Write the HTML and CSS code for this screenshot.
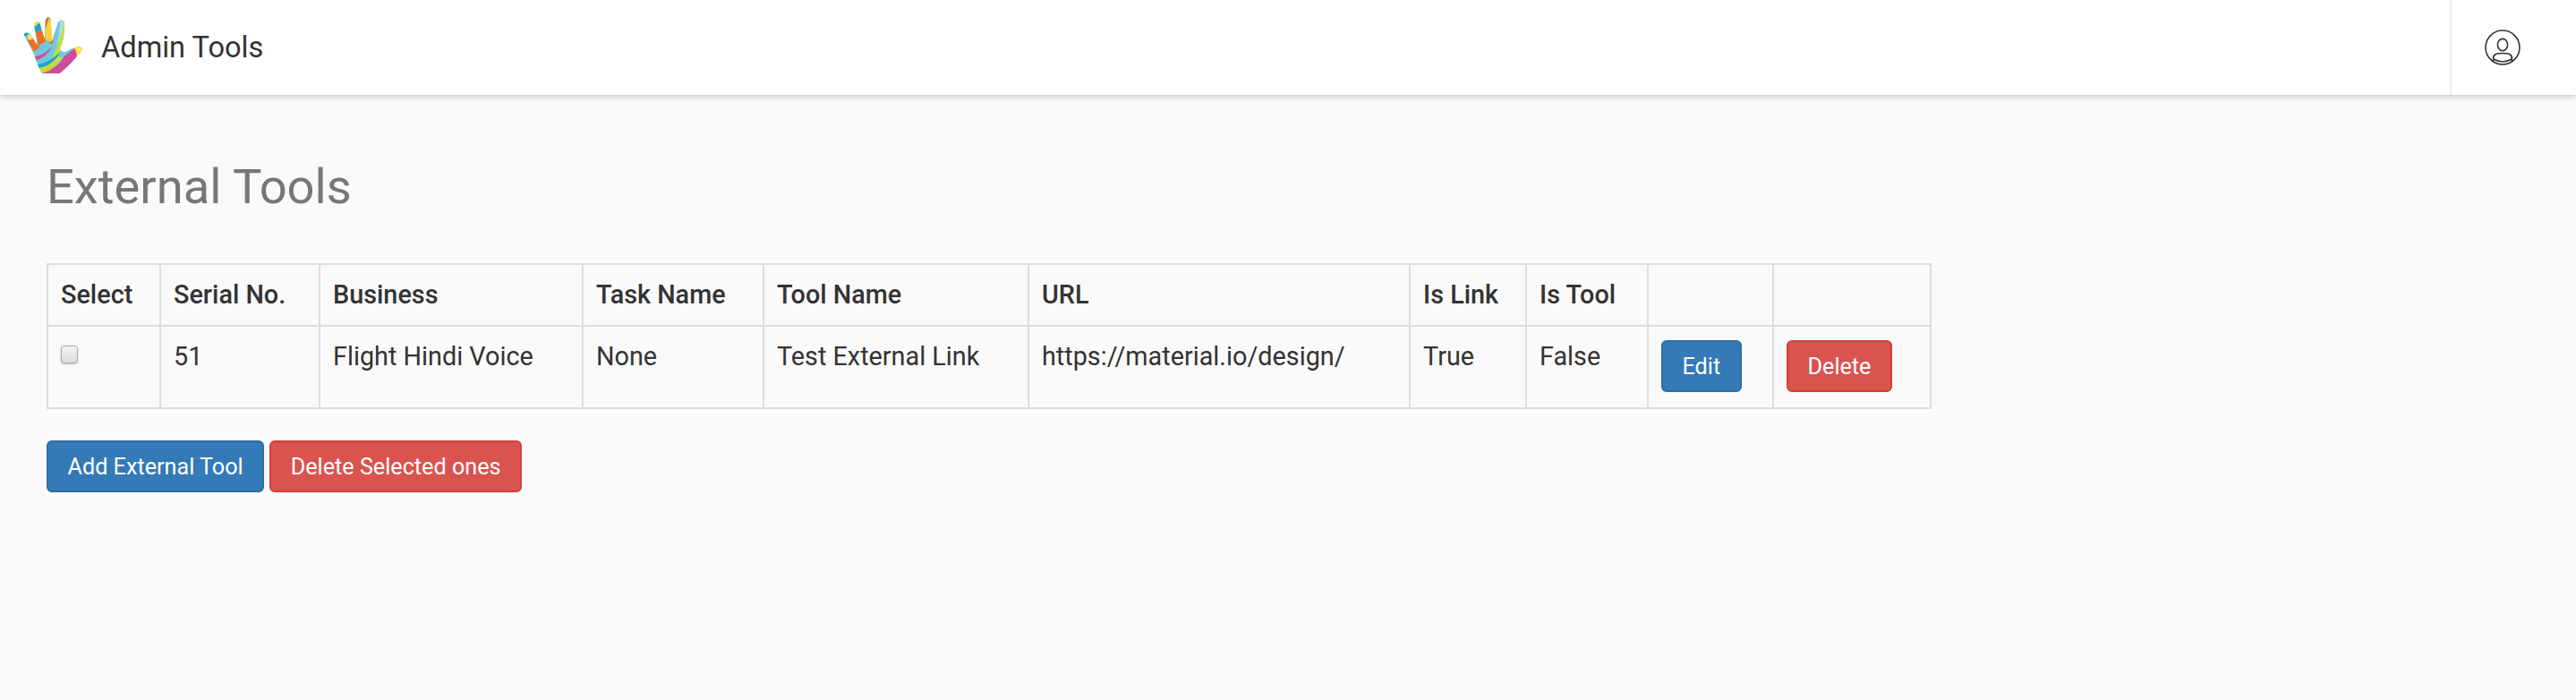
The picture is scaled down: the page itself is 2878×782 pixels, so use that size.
FILE: index.html
```html
<!DOCTYPE html>
<html lang="en">
<head>
    <meta charset="UTF-8">
    <title>External Tools</title>
    <link rel="stylesheet" href="styles.css">
</head>
<body>
<header class="navbar">
    <div class="brand">
        <svg class="logo" viewBox="0 0 270 270" aria-hidden="true">
            <defs>
                <clipPath id="handClip">
                    <path d="M50 92 Q56 80 70 90 L96 128 L84 62 Q88 42 102 50 L120 108 L122 45 Q130 25 140 38 L144 112 L165 50 Q175 38 185 48 Q190 100 170 140 Q178 152 190 150 Q215 135 235 132 Q252 135 240 150 Q215 185 170 222 L110 222 Q95 195 85 160 Z"/>
                </clipPath>
            </defs>
            <g clip-path="url(#handClip)">
                <rect width="270" height="270" fill="#6ec9dc"/>
                <path d="M40 70 L80 90 L70 100 L40 95 Z" fill="#1ea3cf"/>
                <path d="M62 112 L85 97 L102 135 L85 150 Z" fill="#f0701f"/>
                <path d="M60 94 L80 85 L88 100 L68 112 Z" fill="#ffe14a"/>
                <path d="M85 40 L115 40 L105 60 L85 65 Z" fill="#ffd93b"/>
                <path d="M90 82 L110 75 L125 115 L98 128 Z" fill="#f0701f"/>
                <path d="M86 66 L110 45 L108 75 L90 84 Z" fill="#1ea3cf"/>
                <path d="M120 20 L138 20 L124 70 L120 70 Z" fill="#f0701f"/>
                <path d="M124 70 L140 25 L146 115 L122 112 Z" fill="#ffd02e"/>
                <path d="M172 30 L192 40 L185 130 L150 190 L130 195 Q165 140 172 90 Z" fill="#c6dc3c"/>
                <path d="M172 42 L184 42 Q182 90 160 125 Q170 80 172 42 Z" fill="#a8dbe6"/>
                <path d="M132 122 L150 108 L146 124 Z" fill="#f0701f"/>
                <path d="M80 168 Q120 160 145 132 Q130 165 88 180 Z" fill="#d14b9d"/>
                <path d="M85 195 Q140 185 172 150 Q160 185 110 205 L90 205 Z" fill="#1ea3cf"/>
                <path d="M90 205 Q130 205 165 165 L180 170 Q150 210 115 222 L90 222 Z" fill="#c6dc3c"/>
                <path d="M110 222 Q165 205 185 165 Q200 155 222 135 L260 130 L170 230 Z" fill="#d14b9d"/>
                <path d="M215 135 L255 125 L250 155 L225 170 Q232 150 215 135 Z" fill="#ffe94a"/>
            </g>
        </svg>
        <span class="brand-name">Admin Tools</span>
    </div>
    <div class="user-box">
        <svg class="user-icon" viewBox="0 0 40 40" aria-hidden="true">
            <circle cx="20" cy="20" r="19"/>
            <ellipse cx="20" cy="17" rx="5.6" ry="6.6"/>
            <path d="M10 35 C8 27 14 26.5 20 26.5 C26 26.5 32 27 30 35"/>
            <path d="M10 33 Q20 39 30 33"/>
        </svg>
    </div>
</header>

<main class="content">
    <h1 class="page-title">External Tools</h1>

    <table class="tools-table">
        <thead>
            <tr>
                <th>Select</th>
                <th>Serial No.</th>
                <th>Business</th>
                <th>Task Name</th>
                <th>Tool Name</th>
                <th>URL</th>
                <th>Is Link</th>
                <th>Is Tool</th>
                <th></th>
                <th></th>
            </tr>
        </thead>
        <tbody>
            <tr>
                <td><input type="checkbox" class="row-check"></td>
                <td>51</td>
                <td>Flight Hindi Voice</td>
                <td>None</td>
                <td>Test External Link</td>
                <td>https://material.io/design/</td>
                <td>True</td>
                <td>False</td>
                <td><a href="#" class="btn btn-primary">Edit</a></td>
                <td><a href="#" class="btn btn-danger">Delete</a></td>
            </tr>
        </tbody>
    </table>

    <div class="actions">
        <a href="#" class="btn btn-primary">Add External Tool</a>
        <a href="#" class="btn btn-danger">Delete Selected ones</a>
    </div>
</main>
</body>
</html>
```

FILE: styles.css
```css
* {
    box-sizing: border-box;
}

body {
    margin: 0;
    min-height: 100vh;
    background-color: #fafafa;
    font-family: Roboto, sans-serif;
    font-size: 28.8px;
    line-height: 37px;
    color: #333;
}

.navbar {
    display: flex;
    justify-content: space-between;
    height: 106px;
    background-color: #fff;
    box-shadow: 0 2px 6px rgba(0, 0, 0, 0.2);
}

.brand {
    display: flex;
    align-items: center;
    padding-left: 10px;
}

.logo {
    width: 90px;
    height: 90px;
}

.brand-name {
    margin-left: 13px;
    font-size: 32.6px;
}

.user-box {
    display: flex;
    align-items: center;
    justify-content: center;
    width: 141px;
    padding-right: 26px;
    border-left: 2px solid #eee;
}

.user-icon {
    width: 40px;
    height: 40px;
    fill: none;
    stroke: #333;
    stroke-width: 1.6;
}

.content {
    padding: 74px 52px 0;
}

.page-title {
    margin: 0 0 56px;
    font-size: 54.3px;
    line-height: 58px;
    font-weight: 400;
    color: #777;
}

.tools-table {
    table-layout: fixed;
    width: 2104px;
    border-collapse: collapse;
}

.tools-table th,
.tools-table td {
    padding: 15px 15px 15px 14px;
    border: 2px solid #ddd;
    text-align: left;
    vertical-align: top;
    white-space: nowrap;
}

.tools-table td {
    padding-bottom: 17px;
}

.tools-table th {
    font-weight: 500;
}

.tools-table th:nth-child(1) { width: 126px; }
.tools-table th:nth-child(2) { width: 178px; }
.tools-table th:nth-child(3) { width: 294px; }
.tools-table th:nth-child(4) { width: 202px; }
.tools-table th:nth-child(5) { width: 296px; }
.tools-table th:nth-child(6) { width: 426px; }
.tools-table th:nth-child(7) { width: 130px; }
.tools-table th:nth-child(8) { width: 136px; }
.tools-table th:nth-child(9) { width: 140px; }
.tools-table th:nth-child(10) { width: 176px; }

.row-check {
    appearance: none;
    display: block;
    width: 19px;
    height: 20px;
    margin: 6px 0 0;
    border: 1px solid #aaa;
    border-radius: 4px;
    background: linear-gradient(#f4f4f4, #dcdcdc);
    box-shadow: 0 1px 2px rgba(0, 0, 0, 0.25);
}

.btn {
    display: inline-block;
    height: 58px;
    padding: 10px 21.5px;
    border: 2px solid transparent;
    border-radius: 6px;
    font-size: 25.2px;
    line-height: 35px;
    color: #fff;
    text-decoration: none;
}

.btn-primary {
    background-color: #337ab7;
    border-color: #2e6da4;
}

.btn-danger {
    background-color: #d9534f;
    border-color: #d43f3a;
}

.actions {
    display: flex;
    gap: 6px;
    margin-top: 35px;
}
```
